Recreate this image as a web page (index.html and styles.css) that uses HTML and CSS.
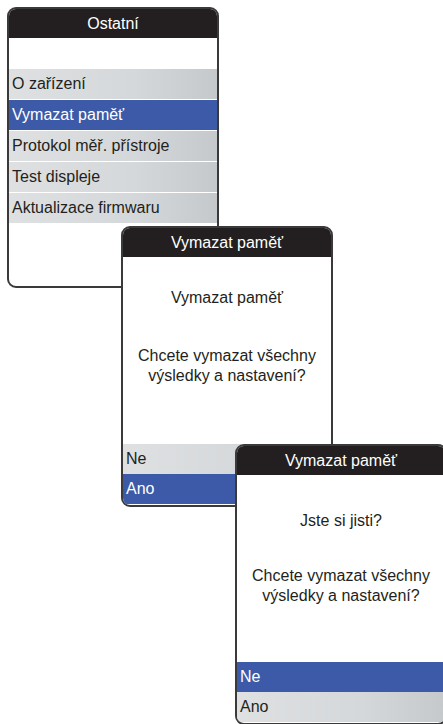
FILE: index.html
```html
<!DOCTYPE html>
<html lang="cs">
<head>
<meta charset="utf-8">
<title>Ostatní</title>
<link rel="stylesheet" href="styles.css">
</head>
<body>
<div class="canvas">
  <section class="screen screen-menu">
    <header class="screen-header">Ostatní</header>
    <div class="menu">
      <div class="row">O zařízení</div>
      <div class="row row-selected">Vymazat paměť</div>
      <div class="row">Protokol měř. přístroje</div>
      <div class="row">Test displeje</div>
      <div class="row">Aktualizace firmwaru</div>
    </div>
  </section>

  <section class="screen screen-confirm">
    <header class="screen-header">Vymazat paměť</header>
    <div class="message message-first">
      <p class="message-title">Vymazat paměť</p>
      <p class="message-text">Chcete vymazat všechny<br>výsledky a nastavení?</p>
    </div>
    <div class="choices">
      <div class="row">Ne</div>
      <div class="row row-selected">Ano</div>
    </div>
  </section>

  <section class="screen screen-sure">
    <header class="screen-header">Vymazat paměť</header>
    <div class="message message-second">
      <p class="message-title">Jste si jisti?</p>
      <p class="message-text">Chcete vymazat všechny<br>výsledky a nastavení?</p>
    </div>
    <div class="choices">
      <div class="row row-selected">Ne</div>
      <div class="row">Ano</div>
    </div>
  </section>
</div>
</body>
</html>
```

FILE: styles.css
```css
* { box-sizing: border-box; }

html, body {
  margin: 0;
  padding: 0;
  background: #ffffff;
}

body {
  width: 443px;
  height: 724px;
  overflow: hidden;
  font-family: "Liberation Sans", Arial, sans-serif;
  color: #231f20;
}

.canvas {
  position: relative;
  width: 443px;
  height: 724px;
}

.screen {
  position: absolute;
  width: 212px;
  height: 281px;
  background: #ffffff;
  border: 2px solid #3a3a3a;
  border-radius: 9px;
  overflow: hidden;
  display: flex;
  flex-direction: column;
}

.screen-menu { left: 7px; top: 7px; }
.screen-confirm { left: 121px; top: 226px; }
.screen-sure { left: 235px; top: 444px; }

.screen-header {
  flex: none;
  height: 29px;
  margin: -2px -2px 0;
  padding-top: 2px;
  height: 31px;
  background: #231f20;
  color: #ffffff;
  font-size: 16px;
  line-height: 29px;
  text-align: center;
}

.menu {
  display: flex;
  flex-direction: column;
  gap: 1px;
  padding-top: 31px;
}

.row {
  height: 30px;
  padding-left: 3px;
  font-size: 16px;
  line-height: 30px;
  white-space: nowrap;
  background: linear-gradient(to right, #dee0e2 0%, #d5d8da 60%, #c6c9cc 100%);
  color: #231f20;
}

.row-selected {
  background: #3c5aa7;
  color: #ffffff;
}

.message {
  flex: 1;
  text-align: center;
  font-size: 16px;
  line-height: 20px;
}

.message p { margin: 0; }

.message-first { padding-top: 31px; }
.message-first .message-text { margin-top: 38px; }

.message-second { padding-top: 36px; }
.message-second .message-text { margin-top: 35px; }

.choices {
  flex: none;
  display: flex;
  flex-direction: column;
  margin-bottom: 1px;
}
```
